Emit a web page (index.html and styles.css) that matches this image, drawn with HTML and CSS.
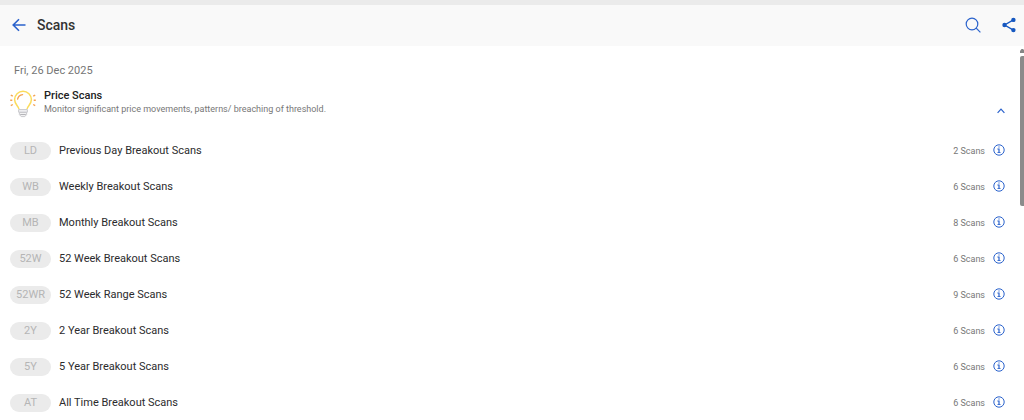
FILE: index.html
```
<!DOCTYPE html>
<html lang="en">
<head>
<meta charset="utf-8">
<title>Scans</title>
<link rel="stylesheet" href="styles.css">
</head>
<body>
<svg class="symbols" aria-hidden="true">
  <symbol id="info" viewBox="0 0 12 12">
    <circle cx="6" cy="6" r="5.2" fill="none" stroke="currentColor" stroke-width="1"/>
    <path d="M5.4 2.4h1.2v1.2H5.4zM4.4 4.6h2.2v3.6h1v.9H4.4v-.9h1V5.5h-1z" fill="currentColor"/>
  </symbol>
</svg>
<header class="topbar">
  <button class="icon-button" aria-label="Back">
    <svg width="14" height="14" viewBox="0 0 14 14" fill="none" stroke="currentColor" stroke-width="1.6"><path d="M13.5 7H1.3M7 1.2L1.2 7L7 12.8"/></svg>
  </button>
  <h1 class="title">Scans</h1>
  <button class="icon-button" aria-label="Search">
    <svg width="16" height="16" viewBox="0 0 16 16" fill="none" stroke="currentColor" stroke-width="1.2"><circle cx="7" cy="7" r="5.8"/><path d="M11.2 11.2L15.4 15.4"/></svg>
  </button>
  <button class="icon-button share" aria-label="Share">
    <svg width="14" height="16" viewBox="0 0 14 16"><path d="M11.4 2.9L2.6 8L11.4 13.1" fill="none" stroke="currentColor" stroke-width="1.3"/><g fill="currentColor"><circle cx="11.4" cy="2.9" r="2.2"/><circle cx="2.5" cy="8" r="2.2"/><circle cx="11.4" cy="13.1" r="2.2"/></g></svg>
  </button>
</header>
<div class="page">
  <main class="content">
    <p class="date">Fri, 26 Dec 2025</p>
    <section>
      <div class="group">
        <svg class="bulb" width="26" height="28" viewBox="0 0 26 28" fill="none">
          <path d="M9 19.3C8.7 16.2 4.6 14.6 4.6 9.6A8.4 8.4 0 0 1 21.4 9.6C21.4 14.6 17.3 16.2 17 19.3" stroke="#fbdc5c" stroke-width="1.5"/>
          <path d="M7.6 9.2A5.8 5.8 0 0 1 12.6 4.6" stroke="#f5a252" stroke-width="1.3" stroke-linecap="round"/>
          <path d="M.8 5.2L2.8 6.2M.2 10.3H2.3M.8 15.6L2.8 14.5M25.2 5.2L23.2 6.2M25.8 10.3H23.7M25.2 15.6L23.2 14.5" stroke="#f5a252" stroke-width="1.4"/>
          <path d="M8.6 19.6H17.4V22.2H8.6ZM9.4 22.4H16.6V24.6L14.8 26.6H11.2L9.4 24.6Z" stroke="#c9c9cd" stroke-width="1" fill="#f2f2f3"/>
          <path d="M10.2 24.5H15.8" stroke="#b4b4b8"/>
        </svg>
        <div class="group-text">
          <h2 class="group-title">Price Scans</h2>
          <p class="group-note">Monitor significant price movements, patterns/ breaching of threshold.</p>
        </div>
        <button class="icon-button collapse" aria-label="Collapse Price Scans">
          <svg width="8" height="6" viewBox="0 0 8 6" fill="none" stroke="currentColor" stroke-width="1.2"><path d="M.6 4.8L4 1.2L7.4 4.8"/></svg>
        </button>
      </div>
      <ul class="scans">
        <li class="scan"><span class="tag">LD</span><span class="name">Previous Day Breakout Scans</span><span class="count">2 Scans</span><button class="icon-button" aria-label="About Previous Day Breakout Scans"><svg class="info"><use href="#info"/></svg></button></li>
        <li class="scan"><span class="tag">WB</span><span class="name">Weekly Breakout Scans</span><span class="count">6 Scans</span><button class="icon-button" aria-label="About Weekly Breakout Scans"><svg class="info"><use href="#info"/></svg></button></li>
        <li class="scan"><span class="tag">MB</span><span class="name">Monthly Breakout Scans</span><span class="count">8 Scans</span><button class="icon-button" aria-label="About Monthly Breakout Scans"><svg class="info"><use href="#info"/></svg></button></li>
        <li class="scan"><span class="tag">52W</span><span class="name">52 Week Breakout Scans</span><span class="count">6 Scans</span><button class="icon-button" aria-label="About 52 Week Breakout Scans"><svg class="info"><use href="#info"/></svg></button></li>
        <li class="scan"><span class="tag">52WR</span><span class="name">52 Week Range Scans</span><span class="count">9 Scans</span><button class="icon-button" aria-label="About 52 Week Range Scans"><svg class="info"><use href="#info"/></svg></button></li>
        <li class="scan"><span class="tag">2Y</span><span class="name">2 Year Breakout Scans</span><span class="count">6 Scans</span><button class="icon-button" aria-label="About 2 Year Breakout Scans"><svg class="info"><use href="#info"/></svg></button></li>
        <li class="scan"><span class="tag">5Y</span><span class="name">5 Year Breakout Scans</span><span class="count">6 Scans</span><button class="icon-button" aria-label="About 5 Year Breakout Scans"><svg class="info"><use href="#info"/></svg></button></li>
        <li class="scan"><span class="tag">AT</span><span class="name">All Time Breakout Scans</span><span class="count">6 Scans</span><button class="icon-button" aria-label="About All Time Breakout Scans"><svg class="info"><use href="#info"/></svg></button></li>
      </ul>
    </section>
  </main>
  <div class="scrollbar" aria-hidden="true">
    <svg width="4" height="4" viewBox="0 0 4 4"><path d="M0 4V2L1.5 0H3L4 1V4Z" fill="#858585"/></svg>
    <div class="thumb"></div>
  </div>
</div>
</body>
</html>
```
FILE: styles.css
```
* {
  box-sizing: border-box;
  margin: 0;
  padding: 0;
}

body {
  display: flex;
  flex-direction: column;
  height: 100vh;
  overflow: hidden;
  background: #fff;
  color: #2b2b2d;
  font-family: Roboto, "Liberation Sans", sans-serif;
  font-size: 11px;
  line-height: 16px;
}

.symbols {
  position: absolute;
  width: 0;
  height: 0;
}

.icon-button {
  display: flex;
  flex: none;
  border: 0;
  background: none;
  color: #2a62cc;
  cursor: pointer;
}

.topbar {
  display: flex;
  flex: none;
  align-items: center;
  padding: 12px 8px 13px 12px;
  border-top: 5px solid #ebebeb;
  background: #f9f9f9;
}

.title {
  flex: 1;
  margin-left: 11px;
  color: #333;
  font-size: 14px;
  font-weight: 500;
}

.share {
  margin-left: 21px;
  color: #1557c0;
}

.page {
  display: flex;
  flex: 1;
  min-height: 0;
}

.content {
  flex: 1;
  overflow: hidden;
  padding: 17px 15px 0 10px;
}

.date {
  padding-left: 4px;
  color: #757575;
}

.group {
  display: flex;
  align-items: flex-start;
  padding: 11px 0 15px;
}

.group-text {
  flex: 1;
  margin-left: 8px;
}

.group-title {
  color: #222;
  font-size: 11px;
  font-weight: 500;
  line-height: 12px;
}

.group-note {
  color: #777;
  font-size: 9px;
  line-height: 14px;
}

.collapse {
  align-self: flex-end;
  margin: 0 0 4px;
}

.scans {
  list-style: none;
}

.scan {
  display: flex;
  align-items: center;
  height: 36px;
}

.tag {
  width: 41px;
  margin-right: 8px;
  border-radius: 9px;
  background: #ebebeb;
  color: #b5b5b5;
  line-height: 18px;
  text-align: center;
}

.name {
  flex: 1;
}

.count {
  margin-right: 8px;
  color: #777;
  font-size: 9px;
}

.info {
  width: 12px;
  height: 12px;
  margin-bottom: 2px;
}

.scrollbar {
  display: flex;
  flex-direction: column;
  gap: 3px;
  width: 4px;
  padding-top: 3px;
}

.thumb {
  height: 150px;
  border-radius: 2px 0 0 2px;
  background: #8b8b8b;
}
```
